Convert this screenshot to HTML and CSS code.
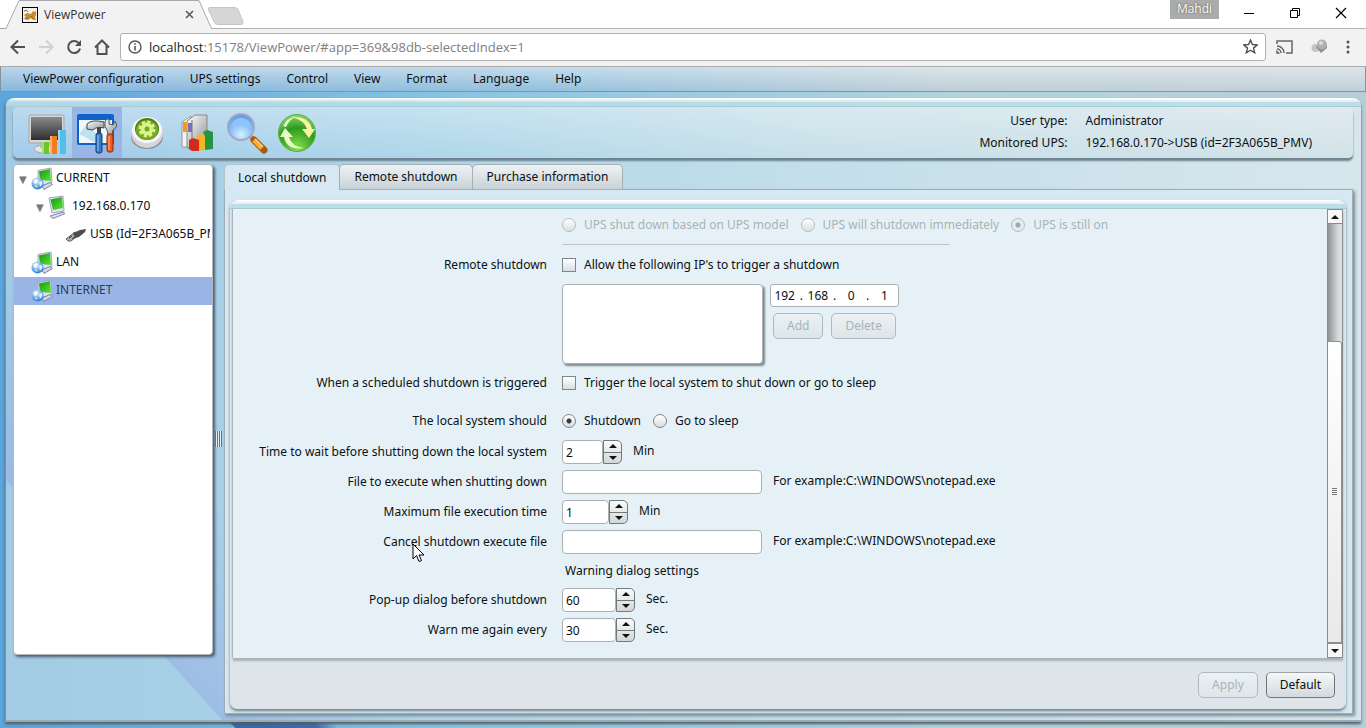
FILE: index.html
```html
<!DOCTYPE html>
<html lang="en">
<head>
  <meta charset="UTF-8">
  <meta name="viewport" content="width=device-width, initial-scale=1.0">
  <title>ViewPower</title>
  <link rel="stylesheet" href="styles.css">
</head>
<body>
  <!-- shared gradients and tree icons -->
  <svg class="defs" width="0" height="0" aria-hidden="true">
    <defs>
      <linearGradient id="steel" x1="0" y1="0" x2="1" y2="1"><stop offset="0" stop-color="#fff"/><stop offset="1" stop-color="#8b8e96"/></linearGradient>
      <linearGradient id="screen" x1="0" y1="0" x2="0" y2="1"><stop offset="0" stop-color="#8a8a8a"/><stop offset="1" stop-color="#2d2d2d"/></linearGradient>
      <linearGradient id="leaf" x1="0" y1="0" x2="1" y2="1"><stop offset="0" stop-color="#119a08"/><stop offset="1" stop-color="#5fe03c"/></linearGradient>
      <radialGradient id="globe" cx=".4" cy=".3" r=".7"><stop offset="0" stop-color="#e4f6ff"/><stop offset="1" stop-color="#2b7fd6"/></radialGradient>
      <radialGradient id="lens" cx=".5" cy=".8" r=".8"><stop offset="0" stop-color="#d3f1ff"/><stop offset="1" stop-color="#4b97ee"/></radialGradient>
      <radialGradient id="ball" cx=".5" cy=".9" r=".9"><stop offset="0" stop-color="#86e04c"/><stop offset=".6" stop-color="#2d9a1e"/><stop offset="1" stop-color="#8bd874"/></radialGradient>
    </defs>
    <symbol id="net" viewBox="0 0 22 24">
      <path d="M7 3.500L20 1l1 14.500-8 2.500-6-2z" fill="#dfe1f0" stroke="#a3a5c4"/>
      <path d="M8 4.500l11-2.500 1 12-11-1z" fill="url(#leaf)"/>
      <path d="M11 19l8-3.500 2.500 2-8.500 5z" fill="#d3d5ea" stroke="#8083a8"/>
      <circle cx="6.500" cy="16.500" r="6" fill="url(#globe)"/>
      <path d="M2 14l3-2 2 1-1 3-2 1zM8 15l3-1 .500 3-2.500 3zM3.500 19l2-.5 1 2.500z" fill="#fff" opacity=".8"/>
    </symbol>
    <symbol id="pc" viewBox="0 0 18 24">
      <path d="M1 3l14-2 1 15-12 2z" fill="#e2e4f2" stroke="#a3a5c4"/>
      <path d="M2.500 4.500L14 2l1 11-10 2z" fill="url(#leaf)"/>
      <path d="M2 21l13-4 2 1.500-12 5z" fill="#dddff0" stroke="#8184a5"/>
    </symbol>
  </svg>

  <div class="tabstrip">
    <div class="browser-tab">
      <svg class="tab-shape" width="212" height="29" viewBox="0 0 212 29"><path d="M0 28.500H6L19 .500H199L211.500 28.500V29H6z" fill="#f2f2f2"/><path d="M0 28.500H6L19 .500H199L211.500 28.500" fill="none" stroke="#a9a9a9"/></svg>
      <svg width="16" height="16" viewBox="0 0 16 16"><rect x=".5" y=".5" width="15" height="15" fill="#f4f1ea" stroke="#000"/><path d="M2 8l3-2 4 1 2-3 1 1 2-1v4l-1 2 1 3h-3l-2-2-3 2-3-1-1-1 2-1z" fill="#c98b2c"/><path d="M2 4q3-2 4 1M3 12l3-1M9 9l2 2" fill="none" stroke="#666"/></svg>
      <span class="tab-title">ViewPower</span>
      <button class="tab-close" aria-label="Close tab"><svg width="9" height="9" viewBox="0 0 9 9"><path d="M1 1l7 7M8 1L1 8" stroke="#5a5a5a" stroke-width="1.600"/></svg></button>
    </div>
    <button class="new-tab" aria-label="New tab"><svg width="36" height="18" viewBox="0 0 36 18"><path d="M1 .5h26q2 0 3 2l5 12q.5 3-2 3H10q-3 0-4-3L.5 3Q0 .5 1 .5z" fill="#d6d6d6" stroke="#c4c4c4"/></svg></button>
    <div class="window-buttons">
      <span class="profile">Mahdi</span>
      <button aria-label="Minimize"><svg width="12" height="12" viewBox="0 0 12 12"><path d="M1 6.500h10" stroke="#000"/></svg></button>
      <button aria-label="Restore"><svg width="12" height="12" viewBox="0 0 12 12" fill="none" stroke="#000"><path d="M1.500 3.500h7v7h-7zM3.500 3V1.500h7v7H9"/></svg></button>
      <button aria-label="Close"><svg width="12" height="12" viewBox="0 0 12 12"><path d="M1 1l10 10M11 1L1 11" stroke="#000" stroke-width="1.200"/></svg></button>
    </div>
  </div>

  <div class="navbar">
    <button aria-label="Back"><svg width="16" height="16" viewBox="0 0 16 16" fill="none" stroke="#505050" stroke-width="2"><path d="M15 8H2M8 1.500L1.500 8 8 14.500"/></svg></button>
    <button aria-label="Forward"><svg width="16" height="16" viewBox="0 0 16 16" fill="none" stroke="#d0d0d0" stroke-width="2"><path d="M1 8h13M8 1.500L14.500 8 8 14.500"/></svg></button>
    <button aria-label="Reload"><svg width="16" height="16" viewBox="0 0 16 16"><path d="M13 4.500A6 6 0 1 0 14 9.500" fill="none" stroke="#505050" stroke-width="2"/><path d="M15 1v6H9z" fill="#505050"/></svg></button>
    <button aria-label="Home"><svg width="16" height="16" viewBox="0 0 16 16" fill="none" stroke="#505050" stroke-width="2"><path d="M1 8.500l7-7 7 7M3.500 7v8h9V7"/></svg></button>
    <div class="address">
      <svg width="14" height="14" viewBox="0 0 14 14"><circle cx="7" cy="7" r="6" fill="none" stroke="#555" stroke-width="1.400"/><path d="M7 6v4.500M7 3.200v1.600" stroke="#555" stroke-width="1.600"/></svg>
      <span class="url"><b>localhost</b>:15178/ViewPower/#app=369&amp;98db-selectedIndex=1</span>
      <svg width="15" height="15" viewBox="0 0 15 15"><path d="M7.500 1l1.900 4.500 4.800.4-3.700 3.200 1.200 4.700-4.200-2.600-4.200 2.600 1.200-4.700L.8 5.900l4.800-.4z" fill="none" stroke="#505050" stroke-width="1.400"/></svg>
    </div>
    <div class="extensions">
      <svg width="17" height="14" viewBox="0 0 17 14" fill="none" stroke="#666" stroke-width="1.500"><path d="M1 4V1h15v12h-6M1 6a7 7 0 0 1 7 7M1 9a4 4 0 0 1 4 4"/><path d="M1 11.500l1.500 1.500H1z" fill="#666"/></svg>
      <svg width="17" height="15" viewBox="0 0 17 15"><circle cx="4.500" cy="9" r="4" fill="#c4c4c4"/><path d="M10 14L5 8l3-3h8v4z" fill="#8d8d8d"/><circle cx="11" cy="5.500" r="5" fill="#b0b0b0"/><circle cx="10" cy="4" r="2" fill="#ddd"/></svg>
      <svg width="4" height="14" viewBox="0 0 4 14" fill="#555"><circle cx="2" cy="2" r="1.500"/><circle cx="2" cy="7" r="1.500"/><circle cx="2" cy="12" r="1.500"/></svg>
    </div>
  </div>

  <nav class="menubar">
    <a href="#">ViewPower configuration</a>
    <a href="#">UPS settings</a>
    <a href="#">Control</a>
    <a href="#">View</a>
    <a href="#">Format</a>
    <a href="#">Language</a>
    <a href="#">Help</a>
  </nav>

  <div class="desktop">
    <div class="window">
      <div class="cap"></div>
      <header class="toolbar">
        <div class="tools">
          <button aria-label="Status"><svg width="40" height="42" viewBox="0 0 40 42"><ellipse cx="17" cy="37" rx="10" ry="4" fill="#e4e4e4" stroke="#aaa"/><path d="M13 30h8v6h-8z" fill="#bbb"/><rect x="2" y="3" width="35" height="28" rx="1" fill="#d6d6d6" stroke="#a5a5a5"/><rect x="4" y="5" width="31" height="23" fill="url(#screen)"/><path d="M15 30h7v12h-7z" fill="#6cc52c"/><path d="M23 24h7v18h-7z" fill="#f47b20"/><path d="M31 18h8v24h-8z" fill="#55bdea"/><path d="M31 18h2v24h-2zM15 30h2v12h-2zM23 24h2v18h-2z" fill="#fff" opacity=".4"/></svg></button>
          <button class="active" aria-label="Settings"><svg width="42" height="42" viewBox="0 0 42 42"><rect x="1" y="2" width="37" height="31" rx="2" fill="#0f63c8"/><rect x="3" y="8" width="33" height="23" fill="#eef8fb"/><path d="M3 22l10-12 4 9 10 8-7 4zM25 9l10 9V8z" fill="#bfe0ee"/><rect x="21" y="15" width="4" height="10" fill="#444"/><rect x="20" y="21" width="6" height="20" rx="2" fill="#2e78cc" stroke="#173e70"/><path d="M11 12q5-5 17-2v6q-7-2-11 2l-6-1z" fill="url(#steel)" stroke="#444"/><path d="M29 10q1-4 4-3v5l4 1 2-4q4 6-2 9l-1 5h-4l-1-5q-3-3-2-8z" fill="url(#steel)" stroke="#555"/><rect x="31" y="22" width="6" height="18" rx="2" fill="#f25b18" stroke="#8a2b05"/><path d="M22 23v16M33 24v14" stroke="#fff" opacity=".6"/></svg></button>
          <button aria-label="Parameters"><svg width="36" height="36" viewBox="0 0 36 36"><ellipse cx="18" cy="22" rx="16" ry="12" fill="#777" opacity=".7"/><ellipse cx="18" cy="18" rx="16" ry="15" fill="#d5d5d5"/><ellipse cx="18" cy="15" rx="15" ry="13" fill="#f7f7f7"/><ellipse cx="18" cy="14" rx="12" ry="11" fill="#4d7f17"/><ellipse cx="18" cy="15" rx="11" ry="10" fill="#72aa25"/><circle cx="18" cy="14" r="6.500" fill="none" stroke="#dcf18a" stroke-width="4" stroke-dasharray="3 2"/><circle cx="18" cy="14" r="4.500" fill="none" stroke="#dcf18a" stroke-width="4"/></svg></button>
          <button aria-label="Reports"><svg width="34" height="38" viewBox="0 0 34 38"><path d="M2 8l9-6v31H2z" fill="#f2f2f2" stroke="#999"/><path d="M7 7l8-6h12v24L14 34H7z" fill="url(#steel)" stroke="#888"/><path d="M12 6v28" stroke="#777"/><path d="M3 8h4v10H3z" fill="#f49a24"/><path d="M8 9h4v9H8z" fill="#7570bd"/><path d="M9 26l4-2 6 2v11h-7l-3-2z" fill="#d32b1b"/><path d="M16 22l4-2 6 2v13l-7 2V26z" fill="#f5b71d"/><path d="M23 18l4-2 6 2v17l-8 1V22z" fill="#279441"/></svg></button>
          <button aria-label="Search"><svg width="42" height="42" viewBox="0 0 42 42"><path d="M24 24l4 4" stroke="#999" stroke-width="4"/><path d="M28 28l10 10" stroke="#a85b0b" stroke-width="7" stroke-linecap="round"/><path d="M28 28l8 8" stroke="#ffae28" stroke-width="5"/><path d="M29 27l8 8" stroke="#ffe1a0" stroke-width="1"/><circle cx="15" cy="15" r="13" fill="url(#lens)" stroke="#a8a5c2" stroke-width="2"/><path d="M5 15a10 9 0 0 1 20 0q-9-5-20 0z" fill="#8fc4fa"/></svg></button>
          <button aria-label="Refresh"><svg width="40" height="40" viewBox="0 0 40 40"><circle cx="20" cy="20" r="18.500" fill="url(#ball)" stroke="#57b23e"/><path d="M6 13Q10 5 19 3q-7 4-10 11z" fill="#e6f8c8"/><path d="M15 4q17-1 20 12h3l-6 9-7-9h5Q27 7 15 4z" fill="#fff1a1"/><path d="M27 35Q10 38 7 24H3l5-9 8 9h-4q3 10 15 11z" fill="#e8fac5"/></svg></button>
        </div>
        <dl class="session">
          <dt>User type:</dt><dd>Administrator</dd>
          <dt>Monitored UPS:</dt><dd>192.168.0.170-&gt;USB (id=2F3A065B_PMV)</dd>
        </dl>
      </header>

      <div class="workspace">
        <aside class="tree">
          <ul>
            <li><i class="arrow">▼</i><svg width="22" height="24"><use href="#net"/></svg><span>CURRENT</span></li>
            <li class="level-2"><i class="arrow">▼</i><svg class="pc" width="18" height="24"><use href="#pc"/></svg><span>192.168.0.170</span></li>
            <li class="level-3"><svg width="22" height="14" viewBox="0 0 22 14"><path d="M1 11L10 4l4 3-8 6H3z" fill="#aaa" stroke="#666"/><path d="M8 5l7-3 6-1-1 3-6 5-4 1z" fill="#4c4c52"/><path d="M4 10l3-2M7 11l3-2" stroke="#333"/></svg><span>USB (Id=2F3A065B_PMV)</span></li>
            <li><i class="arrow"></i><svg width="22" height="24"><use href="#net"/></svg><span>LAN</span></li>
            <li class="selected"><i class="arrow"></i><svg width="22" height="24"><use href="#net"/></svg><span>INTERNET</span></li>
          </ul>
        </aside>
        <div class="splitter"><i></i></div>

        <main class="pages">
          <div class="tabs">
            <button class="active">Local shutdown</button>
            <button>Remote shutdown</button>
            <button>Purchase information</button>
          </div>
          <div class="page">
            <div class="card">
              <div class="cap"></div>
              <div class="view">
                <form class="form">
                  <div class="row disabled">
                    <span class="caption"></span>
                    <label class="choice"><input type="radio" name="ups" disabled>UPS shut down based on UPS model</label>
                    <label class="choice"><input type="radio" name="ups" disabled>UPS will shutdown immediately</label>
                    <label class="choice"><input type="radio" name="ups" disabled checked>UPS is still on</label>
                  </div>
                  <hr>
                  <div class="row">
                    <span class="caption">Remote shutdown</span>
                    <label class="choice"><input type="checkbox">Allow the following IP's to trigger a shutdown</label>
                  </div>
                  <div class="row addresses">
                    <span class="caption"></span>
                    <select class="ip-list" size="4" aria-label="Allowed addresses"></select>
                    <div class="ip-editor">
                      <div class="ip">
                        <input value="192" aria-label="First part">.<input value="168" aria-label="Second part">.<input value="0" aria-label="Third part">.<input value="1" aria-label="Fourth part">
                      </div>
                      <div class="ip-buttons">
                        <button type="button" disabled>Add</button>
                        <button type="button" disabled>Delete</button>
                      </div>
                    </div>
                  </div>
                  <div class="row">
                    <span class="caption">When a scheduled shutdown is triggered</span>
                    <label class="choice"><input type="checkbox">Trigger the local system to shut down or go to sleep</label>
                  </div>
                  <div class="row mode">
                    <span class="caption">The local system should</span>
                    <label class="choice"><input type="radio" name="mode" checked>Shutdown</label>
                    <label class="choice"><input type="radio" name="mode">Go to sleep</label>
                  </div>
                  <div class="row">
                    <label class="caption" for="wait">Time to wait before shutting down the local system</label>
                    <input class="field small" id="wait" value="2">
                    <span class="stepper"><button type="button" aria-label="Up"></button><button type="button" aria-label="Down"></button></span>
                    <span class="unit">Min</span>
                  </div>
                  <div class="row">
                    <label class="caption" for="file">File to execute when shutting down</label>
                    <input class="field wide" id="file">
                    <span class="unit">For example:C:\WINDOWS\notepad.exe</span>
                  </div>
                  <div class="row">
                    <label class="caption" for="max">Maximum file execution time</label>
                    <input class="field medium" id="max" value="1">
                    <span class="stepper"><button type="button" aria-label="Up"></button><button type="button" aria-label="Down"></button></span>
                    <span class="unit">Min</span>
                  </div>
                  <div class="row">
                    <label class="caption" for="cancel">Cancel shutdown execute file</label>
                    <input class="field wide" id="cancel">
                    <span class="unit">For example:C:\WINDOWS\notepad.exe</span>
                    <svg class="pointer" width="13" height="20" viewBox="0 0 13 20"><path d="M1 1v15l3.500-3.500L7 18.500l2.500-1L7 12h5z" fill="#fff" stroke="#000"/></svg>
                  </div>
                  <div class="row heading">
                    <span class="caption"></span>
                    <span>Warning dialog settings</span>
                  </div>
                  <div class="row">
                    <label class="caption" for="popup">Pop-up dialog before shutdown</label>
                    <input class="field large" id="popup" value="60">
                    <span class="stepper"><button type="button" aria-label="Up"></button><button type="button" aria-label="Down"></button></span>
                    <span class="unit">Sec.</span>
                  </div>
                  <div class="row">
                    <label class="caption" for="again">Warn me again every</label>
                    <input class="field large" id="again" value="30">
                    <span class="stepper"><button type="button" aria-label="Up"></button><button type="button" aria-label="Down"></button></span>
                    <span class="unit">Sec.</span>
                  </div>
                </form>
                <div class="scrollbar">
                  <button class="up" aria-label="Scroll up"></button>
                  <div class="track"></div>
                  <div class="thumb"><i></i></div>
                  <button class="down" aria-label="Scroll down"></button>
                </div>
              </div>
              <footer class="actions">
                <button disabled>Apply</button>
                <button>Default</button>
              </footer>
            </div>
          </div>
        </main>
      </div>
    </div>
  </div>
</body>
</html>
```
FILE: styles.css
```css
* {
  box-sizing: border-box;
}
body {
  margin: 0;
  min-height: 100vh;
  display: flex;
  flex-direction: column;
  font-family: "Noto Sans", sans-serif;
  font-size: 12px;
  line-height: 16px;
  color: #0b1013;
}
button, input, select {
  font: inherit;
  color: inherit;
  margin: 0;
}
button {
  padding: 0;
  border: 0;
  background: none;
}
svg {
  display: block;
  flex: none;
}
.defs {
  position: absolute;
}

/* browser */
.tabstrip {
  height: 29px;
  display: flex;
  background: #fff;
  border-bottom: 1px solid #b3b3b3;
  font-family: "Open Sans", sans-serif;
}
.browser-tab {
  position: relative;
  width: 212px;
  height: 29px;
  padding: 0 18px 0 22px;
  display: flex;
  align-items: center;
  gap: 6px;
}
.tab-shape {
  position: absolute;
  left: 0;
  top: 0;
}
.browser-tab > :not(.tab-shape) {
  position: relative;
}
.tab-title {
  flex: 1;
  color: #333;
}
.new-tab {
  align-self: flex-start;
  margin: 7px 0 0 -4px;
}
.window-buttons {
  margin-left: auto;
  display: flex;
}
.window-buttons button {
  width: 46px;
  height: 26px;
  display: grid;
  place-items: center;
}
.window-buttons button:last-child {
  margin-right: 2px;
}
.profile {
  width: 49px;
  height: 19px;
  margin-right: 7px;
  background: #ababab;
  color: #fff;
  text-align: center;
  line-height: 18px;
  text-shadow: 0 0 2px #444;
}
.navbar {
  height: 37px;
  padding: 0 16px 2px 10px;
  display: flex;
  align-items: center;
  gap: 12px;
  background: #f2f2f2;
}
.address {
  flex: 1;
  height: 28px;
  margin: 0 -2px;
  padding: 0 7px;
  display: flex;
  align-items: center;
  gap: 7px;
  background: #fff;
  border: 1px solid #b0b0b0;
  border-radius: 3px;
}
.url {
  flex: 1;
  font-family: "Open Sans", sans-serif;
  font-size: 13px;
  color: #808080;
}
.url b {
  font-weight: normal;
  color: #222;
}
.extensions {
  display: flex;
  align-items: center;
  gap: 18px;
}

/* menu */
.menubar {
  height: 26px;
  padding: 0 22px;
  display: flex;
  align-items: center;
  gap: 26px;
  border: 1px solid #86939a;
  border-top: 1px solid #aaa;
  background: linear-gradient(rgba(255,255,255,.5), rgba(255,255,255,.1)), linear-gradient(90deg, #77aed9, #87b9d9 40%, #b7cad3 70%, #b9cbd2);
}
.menubar a {
  color: inherit;
  text-decoration: none;
}

/* outer window */
.desktop {
  flex: 1;
  display: flex;
  padding: 6px 5px;
  background: linear-gradient(45deg, transparent 166px, #3567af 167px, #3f6bb0 225px, transparent 240px) left bottom / 50% 40px no-repeat, linear-gradient(90deg, #5ba5dd, #8cc5e3 35%, #b3d2de 70%, #b5cfd9);
}
.window {
  flex: 1;
  min-width: 0;
  display: flex;
  flex-direction: column;
  padding: 0 8px 6px 7px;
  border-radius: 7px 7px 0 0;
  border-left: 1px solid #7395aa;
  border-bottom: 2px solid #9aabb2;
  background: linear-gradient(48deg, transparent 160px, rgba(145,160,225,.4) 161px, transparent 300px), linear-gradient(90deg, #a3cbe4, #a9d2e8 20%, #c3dfea 60%, #d8e6ec);
  box-shadow: 0 2px 3px #4a5c66;
}
.cap {
  height: 9px;
  border-radius: 9px 9px 0 0;
  background: linear-gradient(#fff 1px, rgba(255,255,255,.55) 2px, rgba(255,255,255,.3) 4px, rgba(180,221,230,.8) 4px, rgba(180,221,230,.8) 8px, #a8ccd6 8px);
}
.window > .cap {
  margin: 0 -8px 0 -7px;
}
.toolbar {
  display: flex;
  justify-content: space-between;
  align-items: center;
  padding: 0 41px 0 9px;
  border-radius: 5px;
  background: linear-gradient(rgba(255,255,255,.3), transparent), linear-gradient(90deg, #a1cae9, #add6ea 30%, #c7e0e9 60%, #d3e2e8);
  box-shadow: 0 3px 2px #6d8390;
}
.tools {
  display: flex;
}
.tools button {
  width: 50px;
  height: 51px;
  display: grid;
  place-items: center;
}
.tools .active {
  background: #99b5e6;
}
.session {
  margin: 0;
  padding-bottom: 2px;
  display: grid;
  grid-template-columns: auto auto;
  gap: 6px 18px;
}
.session dt {
  text-align: right;
}
.session dd {
  margin: 0;
}

/* tree */
.workspace {
  flex: 1;
  display: flex;
  padding-top: 6px;
}
.tree {
  width: 200px;
  margin-bottom: 59px;
  border: 1px solid #b3b9bc;
  border-radius: 4px;
  background: #fff;
  box-shadow: 2px 2px 3px #4a5c6c;
}
.tree ul {
  margin: 0;
  padding: 0;
  list-style: none;
}
.tree li {
  height: 28px;
  display: flex;
  align-items: center;
  padding: 0 2px 0 5px;
}
.tree .level-2 {
  padding-left: 22px;
}
.tree .level-3 {
  padding-left: 51px;
}
.tree .selected {
  background: #99b5e6;
  color: #2c3b4e;
}
.tree span {
  flex: 1;
  margin-left: 3px;
  padding-bottom: 2px;
  overflow: hidden;
  white-space: nowrap;
}
.tree .pc + span {
  margin-left: 6px;
}
.arrow {
  width: 12px;
  font: 10px "DejaVu Sans", sans-serif;
  color: #6f7b7b;
}
.splitter {
  width: 11px;
  display: grid;
  place-items: center;
}
.splitter i {
  width: 7px;
  height: 16px;
  background: repeating-linear-gradient(90deg, #5f7887 0 1px, #e2eff6 1px 2px);
}

/* tab pages */
.pages {
  flex: 1;
  min-width: 0;
  display: flex;
  flex-direction: column;
}
.tabs {
  display: flex;
  height: 26px;
  margin-bottom: -1px;
}
.tabs button {
  position: relative;
  height: 26px;
  padding: 0 14px 1px;
  margin-right: -1px;
  border: 1px solid #a6b0b5;
  border-radius: 5px 5px 0 0;
  background: linear-gradient(#eef2f5, #c9d2d7);
}
.tabs .active {
  padding: 0 13px;
  border-color: #b4c4cc;
  border-bottom: 0;
  background: #d6e8f4;
}
.page {
  flex: 1;
  display: flex;
  padding: 10px 6px 4px 5px;
  border: 1px solid #9fadb3;
  background: #d6e8f4;
  box-shadow: 2px 2px 3px #7b8a92;
}
.card {
  flex: 1;
  display: flex;
  flex-direction: column;
  border-radius: 7px;
  background: #dde4ea;
  box-shadow: 0 2px 3px #6e808a;
}
.view {
  flex: 1;
  display: flex;
  margin: 0 3px;
  background: #e5f1f7;
  box-shadow: 0 3px 2px #aab3b7, -1px 0 1px #a9b5bb;
}
.form {
  flex: 1;
  padding-top: 1px;
}
.row {
  position: relative;
  height: 30px;
  display: flex;
  align-items: center;
}
.caption {
  width: 314px;
  margin-right: 15px;
  text-align: right;
}
.choice {
  display: flex;
  align-items: center;
  gap: 8px;
  margin-right: 12px;
}
.form hr {
  width: 388px;
  height: 1px;
  margin: 4px 0 5px 329px;
  border: 0;
  background: #bfc6c8;
}
.disabled {
  color: #a9b3b6;
}
.choice input {
  appearance: none;
  width: 14px;
  height: 14px;
  border: 1px solid #7c8589;
  background: linear-gradient(#fff, #d9dee1);
}
.choice input[type=radio] {
  border-radius: 50%;
}
.choice input[type=radio]:checked {
  background: radial-gradient(circle, #333c40 2px, transparent 3px), linear-gradient(#fff, #d9dee1);
}
.choice input:disabled {
  border-color: #b3bcc0;
}
.choice input[type=radio]:disabled:checked {
  background: radial-gradient(circle, #9da6a9 2px, transparent 3px), #e3ebef;
}
.addresses {
  height: 88px;
  padding-top: 4px;
  align-items: flex-start;
}
.ip-list {
  width: 201px;
  height: 80px;
  border: 1px solid #aab0b3;
  border-radius: 4px;
  background: #fff;
  box-shadow: 2px 2px 2px #7d898e;
}
.ip-editor {
  margin-left: 7px;
}
.ip {
  width: 129px;
  height: 23px;
  display: flex;
  align-items: center;
  justify-content: center;
  gap: 3px;
  border: 1px solid #aab0b3;
  border-radius: 3px;
  background: #fff;
}
.ip input {
  width: 24px;
  padding: 0;
  border: 0;
  background: none;
  text-align: center;
}
.ip-buttons {
  display: flex;
  gap: 8px;
  margin: 6px 3px;
}
.ip-buttons button, .actions button {
  height: 26px;
  padding: 0 13px;
  border: 1px solid #6d7679;
  border-top-color: #9ba3a6;
  border-radius: 5px;
  background: linear-gradient(#f6f8f9, #d3d9dc);
}
.ip-buttons button:disabled, .actions button:disabled {
  border-color: #b0b9bc;
  background: linear-gradient(#eaf2f5, #dde5e9);
  color: #a9b3b6;
}
.mode {
  margin: 8px 0 1px;
}
.field {
  height: 24px;
  padding: 0 3px;
  border: 1px solid #aab0b3;
  border-radius: 4px;
  background: #fff;
}
.small {
  width: 41px;
}
.medium {
  width: 47px;
}
.large {
  width: 54px;
}
.wide {
  width: 200px;
}
.stepper {
  width: 19px;
  height: 24px;
  display: flex;
  flex-direction: column;
  border: 1px solid #72797c;
  border-radius: 0 5px 5px 0;
  background: linear-gradient(#fafafa, #d3d7d9);
}
.stepper button {
  flex: 1;
  display: grid;
  place-items: center;
}
.stepper button:first-child {
  border-bottom: 1px solid #72797c;
}
.stepper button::before, .scrollbar button::before {
  content: "";
  border: solid transparent;
  border-width: 0 4px 4px;
  border-bottom-color: #111;
}
.stepper button:last-child::before, .scrollbar .down::before {
  border-width: 4px 4px 0;
  border-top-color: #111;
}
.unit {
  margin-left: 11px;
  padding-bottom: 2px;
}
.heading {
  height: 28px;
}
.heading .caption {
  margin-right: 18px;
}
.pointer {
  position: absolute;
  left: 179px;
  top: 16px;
}
.scrollbar {
  width: 16px;
  display: flex;
  flex-direction: column;
  border-left: 1px solid #868c8f;
  border-right: 1px solid #868c8f;
}
.scrollbar button {
  height: 15px;
  display: grid;
  place-items: center;
  border: 1px solid #868c8f;
  border-width: 1px 0;
  background: #f8f8f8;
}
.track {
  flex: 118;
  background: linear-gradient(90deg, #8d9295, #d5d7d8 70%, #e3e3e3);
}
.thumb {
  flex: 301;
  display: grid;
  place-items: center;
  border: 1px solid #8d9295;
  border-left: 0;
  border-radius: 0 3px 0 0;
  background: linear-gradient(#fff, #e9e9e9);
}
.thumb i {
  width: 5px;
  height: 8px;
  background: repeating-linear-gradient(#777 0 1px, transparent 1px 2px);
}
.actions {
  display: flex;
  justify-content: flex-end;
  gap: 8px;
  padding: 14px 11px 11px;
}
```
